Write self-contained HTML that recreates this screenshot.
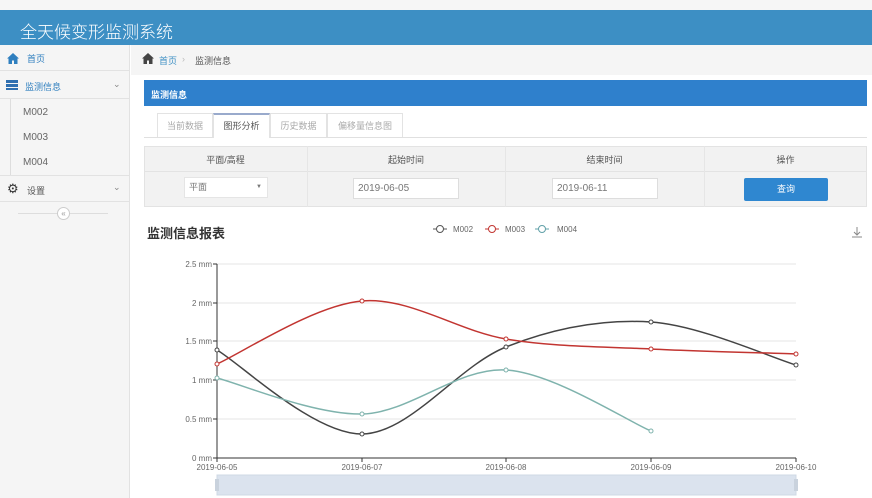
<!DOCTYPE html>
<html><head><meta charset="utf-8"><style>
*{margin:0;padding:0;box-sizing:border-box}
body{width:872px;height:498px;overflow:hidden;background:#fff;font-family:"Liberation Sans","Noto Sans CJK SC",sans-serif;font-size:9px;color:#555;position:relative}
.abs{position:absolute}
</style></head><body>
<div class="abs" style="left:0;top:0;width:872px;height:10px;background:#f6f6f6"></div>
<div class="abs" style="left:0;top:10px;width:872px;height:35px;background:#3d8fc4"></div>
<div class="abs" style="left:20px;top:18px;font-size:17px;color:#fff;font-weight:300">全天候变形监测系统</div>
<!-- sidebar -->
<div class="abs" style="left:0;top:45px;width:130px;height:453px;background:#f5f5f5;border-right:1px solid #e2e2e2"></div>
<div class="abs" style="left:0;top:45px;width:130px;height:26px;border-bottom:1px solid #e2e2e2"></div>
<svg class="abs" style="left:7px;top:53px" width="12" height="11"><path d="M6 0L0 5.5h1.5V11h3.5V7.5h2V11h3.5V5.5H12z" fill="#2f7fbf"/></svg>
<div class="abs" style="left:27px;top:52px;color:#2f7fbf">首页</div>
<div class="abs" style="left:0;top:71px;width:130px;height:28px;border-bottom:1px solid #e2e2e2"></div>
<div class="abs" style="left:6px;top:80px;width:12px;height:10px;background:linear-gradient(#2f6fb0 0 3px,transparent 3px 4px,#2f6fb0 4px 7px,transparent 7px 8px,#2f6fb0 8px 10px)"></div>
<div class="abs" style="left:25px;top:80px;color:#2f7fbf">监测信息</div>
<div class="abs" style="left:113px;top:79px;color:#888">&#8964;</div>
<div class="abs" style="left:10px;top:99px;width:1px;height:76px;background:#ddd"></div>
<div class="abs" style="left:23px;top:107px;color:#666;font-size:10px">M002</div>
<div class="abs" style="left:23px;top:132px;color:#666;font-size:10px">M003</div>
<div class="abs" style="left:23px;top:157px;color:#666;font-size:10px">M004</div>
<div class="abs" style="left:0;top:175px;width:130px;height:27px;border-top:1px solid #e2e2e2;border-bottom:1px solid #e2e2e2"></div>
<div class="abs" style="left:7px;top:181px;font-size:13px;color:#333">&#9881;</div>
<div class="abs" style="left:27px;top:184px">设置</div>
<div class="abs" style="left:113px;top:182px;color:#888">&#8964;</div>
<div class="abs" style="left:18px;top:213px;width:90px;height:1px;background:#ddd"></div>
<div class="abs" style="left:57px;top:207px;width:13px;height:13px;border-radius:50%;border:1px solid #ccc;background:#fff;font-size:8px;text-align:center;line-height:11px;color:#999">«</div>
<!-- breadcrumb -->
<div class="abs" style="left:131px;top:45px;width:741px;height:30px;background:#f5f5f5"></div>
<svg class="abs" style="left:142px;top:53px" width="12" height="11"><path d="M6 0L0 5.5h1.5V11h3.5V7.5h2V11h3.5V5.5H12z" fill="#444"/></svg>
<div class="abs" style="left:159px;top:54px;color:#3d8fc4">首页</div>
<div class="abs" style="left:182px;top:54px;color:#bbb">›</div>
<div class="abs" style="left:195px;top:54px;color:#555">监测信息</div>
<!-- panel -->
<div class="abs" style="left:144px;top:80px;width:723px;height:26px;background:#2f80cc"></div>
<div class="abs" style="left:151px;top:88px;color:#fff;font-weight:bold">监测信息</div>
<div class="abs" style="left:144px;top:137px;width:723px;height:1px;background:#e0e0e0"></div>
<div class="abs" style="left:157px;top:113px;width:56px;height:24px;border:1px solid #e3e3e3;border-bottom:none;color:#aaa;text-align:center;line-height:24px">当前数据</div>
<div class="abs" style="left:213px;top:113px;width:57px;height:25px;border:1px solid #e3e3e3;border-top:2px solid #9ac;border-bottom:none;background:#fff;color:#555;text-align:center;line-height:22px">图形分析</div>
<div class="abs" style="left:270px;top:113px;width:57px;height:24px;border:1px solid #e3e3e3;border-bottom:none;color:#aaa;text-align:center;line-height:24px">历史数据</div>
<div class="abs" style="left:327px;top:113px;width:76px;height:24px;border:1px solid #e3e3e3;border-bottom:none;color:#aaa;text-align:center;line-height:24px">偏移量信息图</div>
<!-- table -->
<div class="abs" style="left:144px;top:146px;width:723px;height:61px;background:#f2f2f2;border:1px solid #e3e3e3"></div>
<div class="abs" style="left:144px;top:171px;width:723px;height:1px;background:#e3e3e3"></div>
<div class="abs" style="left:307px;top:146px;width:1px;height:61px;background:#e6e6e6"></div>
<div class="abs" style="left:505px;top:146px;width:1px;height:61px;background:#e6e6e6"></div>
<div class="abs" style="left:704px;top:146px;width:1px;height:61px;background:#e6e6e6"></div>
<div class="abs" style="left:144px;top:153px;width:163px;text-align:center;color:#555">平面/高程</div>
<div class="abs" style="left:307px;top:153px;width:198px;text-align:center;color:#555">起始时间</div>
<div class="abs" style="left:505px;top:153px;width:199px;text-align:center;color:#555">结束时间</div>
<div class="abs" style="left:704px;top:153px;width:163px;text-align:center;color:#555">操作</div>
<div class="abs" style="left:184px;top:177px;width:84px;height:21px;background:#fff;border:1px solid #e5e5e5;padding-left:4px;line-height:19px;color:#777">平面<span style="position:absolute;right:5px;font-size:6px">▼</span></div>
<div class="abs" style="left:353px;top:178px;width:106px;height:21px;background:#fff;border:1px solid #ddd;padding-left:4px;line-height:19px;color:#777;font-size:10px">2019-06-05</div>
<div class="abs" style="left:552px;top:178px;width:106px;height:21px;background:#fff;border:1px solid #ddd;padding-left:4px;line-height:19px;color:#777;font-size:10px">2019-06-11</div>
<div class="abs" style="left:744px;top:178px;width:84px;height:23px;background:#2f87d0;border-radius:2px;color:#fff;text-align:center;line-height:23px">查询</div>
<!-- chart -->
<div class="abs" style="left:147px;top:223px;font-size:13px;font-weight:bold;color:#333">监测信息报表</div>
<svg class="abs" style="left:0;top:0" width="872" height="498">
<g font-family="Liberation Sans" font-size="8" fill="#666">
<path d="M433 229h14" stroke="#555"/><path d="M485 229h14" stroke="#c23531"/><path d="M535 229h14" stroke="#61a0a8"/>
<circle cx="440" cy="229" r="3.5" fill="#fff" stroke="#555"/><text x="453" y="232">M002</text>
<circle cx="492" cy="229" r="3.5" fill="#fff" stroke="#c23531"/><text x="505" y="232">M003</text>
<circle cx="542" cy="229" r="3.5" fill="#fff" stroke="#61a0a8"/><text x="557" y="232">M004</text>
<g stroke="#e6e6e6"><path d="M217 264H796M217 303H796M217 341H796M217 380H796M217 419H796"/></g>
<path d="M217 264V458H796" stroke="#333" fill="none"/>
<g stroke="#333"><path d="M213 264h4M213 303h4M213 341h4M213 380h4M213 419h4M213 458h4M217 458v4M362 458v4M506 458v4M651 458v4M796 458v4"/></g>
<g text-anchor="end"><text x="212" y="267">2.5 mm</text><text x="212" y="306">2 mm</text><text x="212" y="344">1.5 mm</text><text x="212" y="383">1 mm</text><text x="212" y="422">0.5 mm</text><text x="212" y="461">0 mm</text></g>
<g text-anchor="middle"><text x="217" y="470">2019-06-05</text><text x="362" y="470">2019-06-07</text><text x="506" y="470">2019-06-08</text><text x="651" y="470">2019-06-09</text><text x="796" y="470">2019-06-10</text></g>
</g>
<g fill="none" stroke-width="1.5">
<path stroke="#444" d="M217 350C241 364 314 434.5 362 434C410 433.5 458 366 506 347C554 328 603 319 651 322C699 325 772 358 796 365"/>
<path stroke="#c23531" d="M217 364C241 353.5 314 305 362 301C410 297 458 331 506 339C554 347 603 346.5 651 349C699 351.5 772 353 796 354"/>
<path stroke="#7fb3ad" d="M217 378C241 384 314 415 362 414C410 413 458 367 506 370C554 373 627 421 651 431"/>
</g>
<g fill="#fff" stroke-width="1">
<g stroke="#444"><circle cx="217" cy="350" r="2"/><circle cx="362" cy="434" r="2"/><circle cx="506" cy="347" r="2"/><circle cx="651" cy="322" r="2"/><circle cx="796" cy="365" r="2"/></g>
<g stroke="#c23531"><circle cx="217" cy="364" r="2"/><circle cx="362" cy="301" r="2"/><circle cx="506" cy="339" r="2"/><circle cx="651" cy="349" r="2"/><circle cx="796" cy="354" r="2"/></g>
<g stroke="#7fb3ad"><circle cx="217" cy="378" r="2"/><circle cx="362" cy="414" r="2"/><circle cx="506" cy="370" r="2"/><circle cx="651" cy="431" r="2"/></g>
</g>
<rect x="217" y="475" width="579" height="20" fill="#dbe3ee" stroke="#cfd8e4"/>
<rect x="215" y="479" width="4" height="12" fill="#c9d2dd"/><rect x="794" y="479" width="4" height="12" fill="#c9d2dd"/>
<path d="M857 227v8M854 232l3 3 3-3M852 237h10" stroke="#888" fill="none"/>
</svg>
</body></html>
